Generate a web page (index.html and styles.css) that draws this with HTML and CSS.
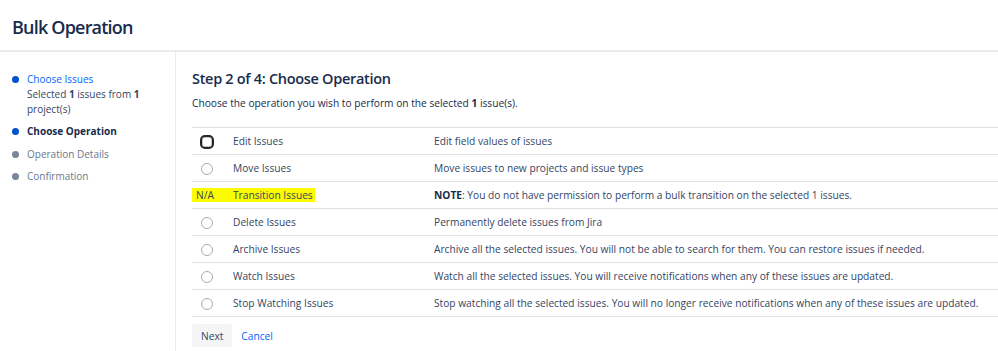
FILE: index.html
```html
<!DOCTYPE html>
<html lang="en">
<head>
    <meta charset="UTF-8">
    <title>Bulk Operation</title>
    <link rel="stylesheet" href="styles.css">
</head>
<body>
    <div class="page-header">
        <h1>Bulk Operation</h1>
    </div>

    <div class="layout">
        <div class="sidebar">
            <ul class="steps">
                <li class="done">
                    <a href="#">Choose Issues</a>
                    <div class="step-note">Selected <b>1</b> issues from <b>1</b> project(s)</div>
                </li>
                <li class="current">Choose Operation</li>
                <li class="todo">Operation Details</li>
                <li class="todo">Confirmation</li>
            </ul>
        </div>

        <div class="main">
            <h2>Step 2 of 4: Choose Operation</h2>
            <p class="intro">Choose the operation you wish to perform on the selected <b>1</b> issue(s).</p>

            <table class="ops">
                <colgroup>
                    <col class="col-pick">
                    <col class="col-name">
                    <col>
                </colgroup>
                <tr>
                    <td class="pick"><span class="radio focused"></span></td>
                    <td class="name">Edit Issues</td>
                    <td class="desc">Edit field values of issues</td>
                </tr>
                <tr>
                    <td class="pick"><span class="radio"></span></td>
                    <td class="name">Move Issues</td>
                    <td class="desc">Move issues to new projects and issue types</td>
                </tr>
                <tr>
                    <td class="pick na"><span class="hl na-hl">N/A</span></td>
                    <td class="name"><span class="hl name-hl">Transition Issues</span></td>
                    <td class="desc"><b>NOTE</b>: You do not have permission to perform a bulk transition on the selected 1 issues.</td>
                </tr>
                <tr>
                    <td class="pick"><span class="radio"></span></td>
                    <td class="name">Delete Issues</td>
                    <td class="desc">Permanently delete issues from Jira</td>
                </tr>
                <tr>
                    <td class="pick"><span class="radio"></span></td>
                    <td class="name">Archive Issues</td>
                    <td class="desc">Archive all the selected issues. You will not be able to search for them. You can restore issues if needed.</td>
                </tr>
                <tr>
                    <td class="pick"><span class="radio"></span></td>
                    <td class="name">Watch Issues</td>
                    <td class="desc">Watch all the selected issues. You will receive notifications when any of these issues are updated.</td>
                </tr>
                <tr>
                    <td class="pick"><span class="radio"></span></td>
                    <td class="name">Stop Watching Issues</td>
                    <td class="desc">Stop watching all the selected issues. You will no longer receive notifications when any of these issues are updated.</td>
                </tr>
            </table>

            <div class="actions">
                <button class="btn">Next</button>
                <a href="#" class="cancel">Cancel</a>
            </div>
        </div>
    </div>
</body>
</html>
```

FILE: styles.css
```css
body {
    margin: 0;
    font-family: "Open Sans", "Noto Sans", Arial, sans-serif;
    font-size: 10.2px;
    color: #172b4d;
    background: #fff;
}
.page-header {
    height: 46px;
    padding-top: 4px;
    border-bottom: 2px solid #ebecf0;
    padding-left: 12px;
    display: flex;
    align-items: center;
}
.page-header h1 {
    margin: 0;
    font-size: 18px;
    font-weight: 600;
    color: #172b4d;
    letter-spacing: -0.8px;
}
.layout {
    display: flex;
    height: 299px;
}
.sidebar {
    width: 175px;
    border-right: 1px solid #ebecf0;
    padding-top: 19.5px;
    font-size: 10px;
}
.steps {
    list-style: none;
    margin: 0;
    padding: 0 0 0 12px;
}
.steps li {
    position: relative;
    padding-left: 15px;
    line-height: 15px;
    margin-bottom: 7.5px;
    color: #6b778c;
}
.steps li::before {
    content: "";
    position: absolute;
    left: 0;
    top: 4px;
    width: 7px;
    height: 7px;
    border-radius: 50%;
    background: #7a869a;
}
.steps li.done::before,
.steps li.current::before {
    background: #0052cc;
}
.steps a {
    color: #0065ff;
    text-decoration: none;
}
.step-note {
    color: #344563;
}
.steps li.current {
    font-weight: 700;
    color: #172b4d;
}
.main {
    flex: 1;
    padding-left: 16px;
}
.main h2 {
    margin: 17px 0 0;
    font-size: 14.5px;
    font-weight: 600;
    color: #172b4d;
    line-height: 20px;
    letter-spacing: -0.3px;
}
.intro {
    margin: 7px 0 16px;
    color: #172b4d;
    line-height: 15px;
}
.ops {
    width: 100%;
    table-layout: fixed;
    border-collapse: collapse;
    border-top: 1px solid #dfe1e6;
}
.col-pick { width: 33px; }
.col-name { width: 201px; }
.ops td {
    height: 26px;
    border-bottom: 1px solid #dfe1e6;
    padding: 0 0 0 8px;
    vertical-align: middle;
    color: #344563;
    white-space: nowrap;
    overflow: hidden;
}
.ops td.pick {
    padding: 0;
    text-align: center;
}
.ops td.desc b {
    color: #172b4d;
    font-weight: 700;
}
.radio {
    display: inline-block;
    width: 10px;
    height: 10px;
    border: 1px solid #a5adba;
    border-radius: 50%;
    vertical-align: middle;
    margin-left: -3px;
}
.radio.focused {
    width: 10px;
    height: 10px;
    border: 2px solid #252525;
    box-shadow: 0 0 0 1px #c1c7d0 inset;
    border-radius: 5px;
}
.ops td.na {
    text-align: left;
}
.hl {
    background: #fcfc00;
    padding: 2px 2px 3px 0;
}
.na-hl {
    display: inline-block;
    width: 33px;
    line-height: 14px;
    padding: 0 0 0 4px;
    box-sizing: border-box;
}
.name-hl {
    display: inline-block;
    line-height: 14px;
    margin-left: -8px;
    padding: 0 2px 0 8px;
}
.actions {
    display: flex;
    align-items: center;
    margin-top: 7px;
}
.btn {
    font-family: inherit;
    font-size: 10.2px;
    color: #344563;
    background: #f4f5f7;
    border: none;
    border-radius: 3px;
    padding: 0 9px;
    height: 23px;
}
.cancel {
    color: #0065ff;
    text-decoration: none;
    margin-left: 9px;
}
```
